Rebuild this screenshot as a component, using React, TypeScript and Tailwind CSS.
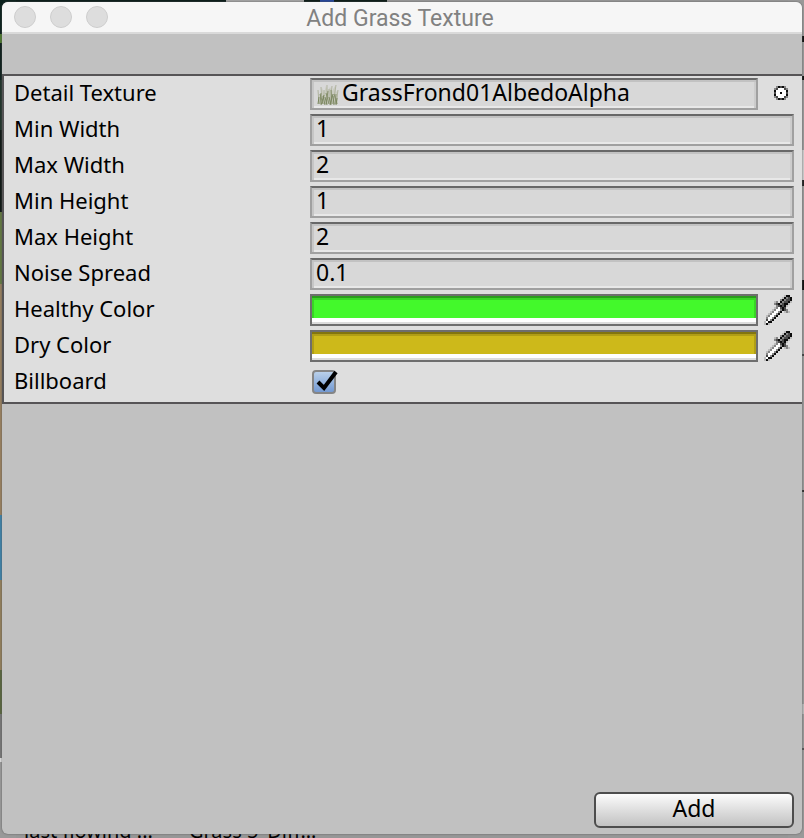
import { useState } from "react";

interface NumberField {
  id: string;
  label: string;
  value: string;
}

const numberFields: NumberField[] = [
  { id: "minWidth", label: "Min Width", value: "1" },
  { id: "maxWidth", label: "Max Width", value: "2" },
  { id: "minHeight", label: "Min Height", value: "1" },
  { id: "maxHeight", label: "Max Height", value: "2" },
  { id: "noiseSpread", label: "Noise Spread", value: "0.1" },
];

const rowClass = "flex h-9 items-center pl-[10px] pr-2";
const labelClass = "w-[296px] shrink-0 pb-1";
const boxClass =
  "h-8 min-w-0 flex-1 border-2 border-[#a0a0a0] border-t-[#686868] bg-[#d8d8d8] text-[23px] shadow-[inset_0_2px_0_#c2c2c2,inset_2px_0_0_#c6c6c6,inset_-2px_0_0_#cccccc,inset_0_-2px_0_#e8e8e8]";

const pixelColors: Record<string, string> = {
  k: "#0c0c0c",
  d: "#4a4a4a",
  g: "#858585",
  l: "#bdbdbd",
  w: "#ffffff",
};

const eyedropper = [
  "..........lkk.",
  ".........lkgdk",
  "........gkgddk",
  ".....lg.kgddkl",
  ".....gdkgdkkl.",
  "......gdkdkl..",
  ".....lgwdkd...",
  "....lgwwgkdg..",
  "...lgwwgk.lgl.",
  "..lgwwgk......",
  ".lgwwgk.......",
  ".gwwgk........",
  ".dwgk.........",
  "lwkk..........",
  "lkl...........",
];

const target = [
  ".gkdkg.",
  "gdwwwdg",
  "kwwwwwk",
  "dwwkwwd",
  "kwwwwwk",
  "gdwwwdg",
  ".gkdkg.",
];

// low resolution icon, each character is one 2x2 block
const PixelIcon = ({ rows }: { rows: string[] }) => (
  <svg
    width={rows[0].length * 2}
    height={rows.length * 2}
    viewBox={`0 0 ${rows[0].length} ${rows.length}`}
    shapeRendering="crispEdges"
  >
    {rows.map((row, y) =>
      row.split("").map((c, x) =>
        c === "." ? null : (
          <rect key={`${x}-${y}`} x={x} y={y} width="1" height="1" fill={pixelColors[c]} />
        )
      )
    )}
  </svg>
);

const GrassIcon = () => (
  <svg width="24" height="24" viewBox="0 0 24 24" fill="none" className="shrink-0">
    <path d="M2 22L3 12L5 14L6 6L8 11L10 4L12 9L14 5L16 9L19 4L20 10L22 8L22 22Z" fill="#c3c6b6" opacity="0.7" />
    <path d="M3 22L2 8M6 22L5 5M8 22L8 8M11 22L11 3M14 22L16 4M17 22L20 3M20 22L22 8M13 22L13 7" stroke="#b0b39f" strokeWidth="1" />
    <path d="M4 22L5 11M7 22L4 12M10 22L12 9M13 22L10 11M16 22L15 8M19 22L20 12M21 22L18 12" stroke="#86906c" strokeWidth="1" />
    <path d="M5 23L8 13M9 23L7 14M11 23L9 15M14 23L17 12M18 23L17 14M2 22L3 15M15 23L13 15M20 23L21 16" stroke="#7b8760" strokeWidth="1" />
  </svg>
);

interface ColorRowProps {
  label: string;
  swatchClass: string;
}

const ColorRow = ({ label, swatchClass }: ColorRowProps) => (
  <div className={rowClass}>
    <span className={labelClass}>{label}</span>
    <button
      aria-label={label}
      className="flex h-8 min-w-0 flex-1 flex-col border-2 border-[#6e6e6e] bg-white"
    >
      <span className={`h-[22px] w-full ${swatchClass}`} />
      <span className="h-[6px] w-full border-b-2 border-[#dcdcdc]" />
    </button>
    <button aria-label={`Pick ${label}`} className="flex w-9 justify-end pr-[2px]">
      <PixelIcon rows={eyedropper} />
    </button>
  </div>
);

export default function App() {
  const [values, setValues] = useState(numberFields.map((f) => f.value));
  const [billboard, setBillboard] = useState(true);

  const handleChange = (index: number, value: string) => {
    setValues(values.map((v, i) => (i === index ? value : v)));
  };

  return (
    <div className="relative flex min-h-screen flex-col overflow-hidden bg-[#979797] px-[2px] pt-[2px] pb-1 font-['Noto_Sans',sans-serif] text-[22px] leading-7 text-black">
      {/* editor behind the window */}
      <div className="absolute inset-y-0 left-0 w-4 bg-[linear-gradient(to_bottom,#0c211d_0_34px,#4f7a30_34px_43px,#0d1f1c_43px_80px,#20332a_80px_130px,#0e1713_130px_212px,#647a42_212px_284px,#98805f_284px_515px,#3f82a8_515px_580px,#927f5c_580px_670px,#59663f_670px_714px,#777_714px_758px,#ddd_758px_762px,#999_762px)]" />
      <div className="absolute inset-y-0 right-0 w-4 bg-[linear-gradient(to_bottom,#999_0_36px,#111_36px_42px,#999_42px_76px,#111_76px_80px,#999_80px_150px,#ccc_150px_180px,#222_180px_186px,#999_186px_280px,#111_280px_290px,#999_290px_354px,#444_354px_356px,#999_356px_490px,#333_490px_492px,#999_492px_704px,#bbb_704px_714px,#999_714px_748px,#555_748px_750px,#999_750px)]" />
      <div className="absolute left-4 top-0 h-1 w-[371px] bg-[linear-gradient(to_right,#0a1c19_0_210px,#a5a5a5_210px_288px,#0c1c18_288px_304px,#24469a_304px_318px,#0c1c18_318px)]" />
      <div className="absolute bottom-[-5px] left-6 flex gap-9 text-[20px] leading-6">
        <span>last flowing ...</span>
        <span>Grass 5_Diff...</span>
      </div>

      <main className="relative flex flex-1 flex-col overflow-hidden rounded-[6px] bg-[#c1c1c1] shadow-[0_0_2px_#555]">
        <header className="relative flex h-8 items-center justify-center border-b-2 border-[#dadada] bg-[#f6f6f6]">
          <div className="absolute left-3 flex gap-[14px]">
            <button aria-label="Close" className="size-[22px] rounded-full border border-[#cdcdcd] bg-[#dddddd]" />
            <button aria-label="Minimize" className="size-[22px] rounded-full border border-[#cdcdcd] bg-[#dddddd]" />
            <button aria-label="Zoom" className="size-[22px] rounded-full border border-[#cdcdcd] bg-[#dddddd]" />
          </div>
          <h1 className="pt-1 pr-1 font-[Roboto,sans-serif] text-[23px] text-[#818181]">
            Add Grass Texture
          </h1>
        </header>

        <section className="mt-10 border-y-2 border-l-2 border-[#565456] bg-[#dedede] pb-[2px]">
          <div className={rowClass}>
            <span className={labelClass}>Detail Texture</span>
            <button className={`flex items-center pl-1 text-left ${boxClass}`}>
              <GrassIcon />
              <span className="pl-[2px] pb-1">GrassFrond01AlbedoAlpha</span>
            </button>
            <button aria-label="Select texture" className="flex w-9 justify-end pr-[6px] pb-[2px]">
              <PixelIcon rows={target} />
            </button>
          </div>
          {numberFields.map((field, i) => (
            <div key={field.id} className={rowClass}>
              <label htmlFor={field.id} className={labelClass}>
                {field.label}
              </label>
              <input
                id={field.id}
                type="text"
                value={values[i]}
                onChange={(e) => handleChange(i, e.target.value)}
                className={`px-1 pb-1 outline-none ${boxClass}`}
              />
            </div>
          ))}
          <ColorRow
            label="Healthy Color"
            swatchClass="bg-[#43f92b] shadow-[inset_0_2px_0_#2a9c1c,inset_0_4px_0_#39d425,inset_2px_0_0_#39d425,inset_-2px_0_0_#39d425]"
          />
          <ColorRow
            label="Dry Color"
            swatchClass="bg-[#cdb91a] shadow-[inset_0_2px_0_#827510,inset_0_4px_0_#b09e16,inset_2px_0_0_#b09e16,inset_-2px_0_0_#b09e16]"
          />
          <div className={rowClass}>
            <label htmlFor="billboard" className={labelClass}>
              Billboard
            </label>
            <span className="relative ml-[2px] size-6">
              <input
                id="billboard"
                type="checkbox"
                checked={billboard}
                onChange={(e) => setBillboard(e.target.checked)}
                className="block size-6 appearance-none rounded-[4px] border-2 border-[#858585] bg-linear-to-b from-[#b9d0ea] to-[#7399d2]"
              />
              {billboard && (
                <svg width="26" height="24" viewBox="0 0 26 24" className="pointer-events-none absolute left-0 top-0">
                  <path d="M6 12L12 18L24 2" fill="none" stroke="#000" strokeWidth="4" />
                </svg>
              )}
            </span>
          </div>
        </section>

        <footer className="mt-auto flex justify-end pr-2 pb-[6px]">
          <button className="h-9 w-[200px] rounded-[6px] border-2 border-[#4d4d4d] bg-linear-to-b from-[#fcfcfc] to-[#c2c2c2] pb-1 text-[23px]">
            Add
          </button>
        </footer>
      </main>
    </div>
  );
}
